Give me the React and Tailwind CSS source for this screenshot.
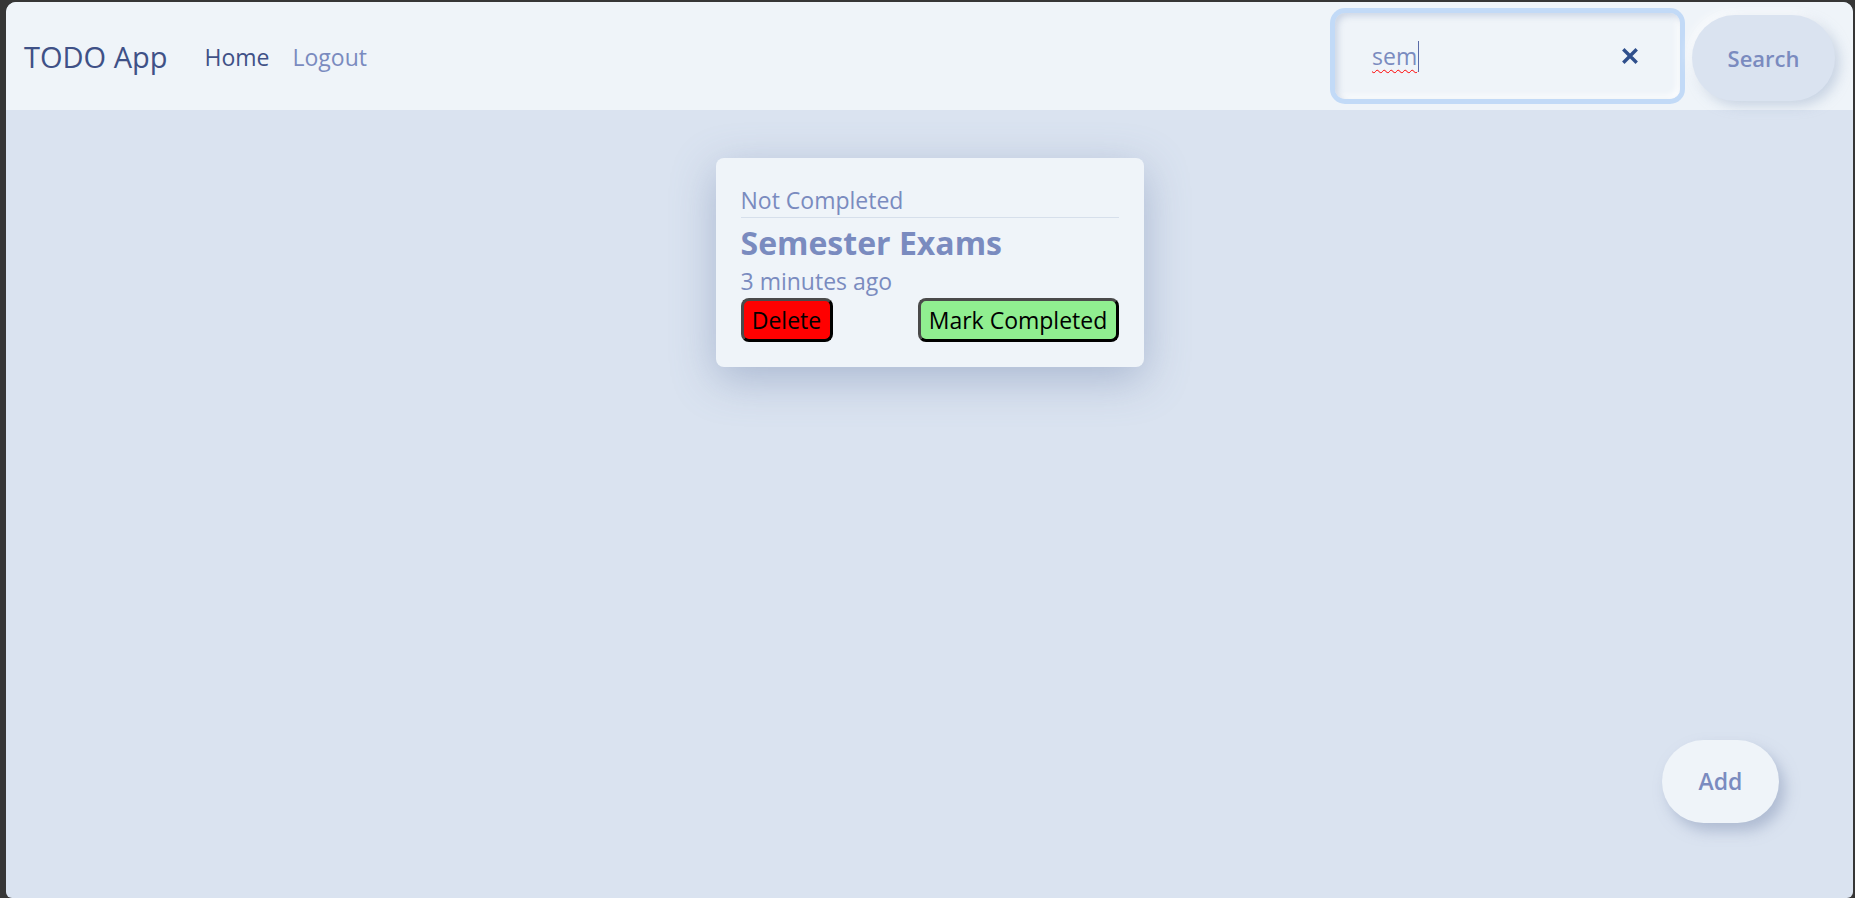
import React from "react";

function XIcon() {
  return (
    <svg width="16" height="16" viewBox="0 0 16 16" className="block">
      <path d="M2.5 2.5 L13.5 13.5 M13.5 2.5 L2.5 13.5" stroke="#2f4f8c" strokeWidth="3.4" strokeLinecap="square" fill="none" />
    </svg>
  );
}

export default function App() {
  return (
    <div className="h-[898px] w-full overflow-hidden bg-[#363636] pt-[2px] pl-[6px] pr-[2px] font-['Open_Sans',sans-serif]">
      <div className="relative flex h-full flex-col overflow-hidden rounded-t-[10px] rounded-b-[6px] bg-[#dae3f0]">
        <header className="flex h-[108px] shrink-0 items-center bg-[#eff4f9] pl-[18px] pr-[18px]">
          <span className="text-[29px] leading-none text-[#3f5187]">TODO App</span>
          <nav className="ml-[37px] mt-[2px] flex items-center text-[23px] leading-none">
            <a className="text-[#3f5187]">Home</a>
            <a className="ml-[23px] text-[#7a8bbf]">Logout</a>
          </nav>
          <div className="ml-auto flex items-center">
            <div className="flex h-[86px] w-[345px] items-center rounded-[10px] bg-[#eff4f9] pl-[37px] pr-[42px] shadow-[inset_3px_3px_6px_rgba(160,175,205,0.45),inset_-3px_-3px_6px_rgba(255,255,255,0.9)] ring-[5px] ring-[#c2daf7]">
              <span className="text-[23px] leading-none text-[#7a8bbf] underline decoration-wavy decoration-[#ff0000] decoration-1 underline-offset-[4px]">sem</span>
              <span className="ml-[1px] h-[31px] w-[1px] bg-[#5a6ba8]" />
              <span className="ml-auto"><XIcon /></span>
            </div>
            <button className="ml-[12px] mt-[4px] flex h-[86px] w-[143px] items-center justify-center rounded-full bg-[#dae3f0] text-[22px] font-semibold text-[#7a8bbf] shadow-[5px_5px_12px_rgba(170,185,210,0.55),-4px_-4px_10px_rgba(255,255,255,0.7)]">
              Search
            </button>
          </div>
        </header>
        <main className="flex flex-1 justify-center pt-[48px]">
          <div className="h-fit w-[428px] rounded-[8px] bg-[#eff4f9] px-[25px] pt-[26px] pb-[25px] shadow-[0_12px_44px_rgba(110,130,170,0.45)]">
            <div className="border-b border-[#d6dfeb] pb-[1px] text-[23px] leading-[32px] text-[#7a8bbf]">Not Completed</div>
            <div className="mt-[5px] text-[32px] font-bold leading-[40px] text-[#7a8bbf]">Semester Exams</div>
            <div className="mt-[3px] text-[23px] leading-[30px] text-[#7a8bbf]">3 minutes ago</div>
            <div className="mt-[2px] flex justify-between">
              <button className="h-[44px] w-[92px] rounded-[8px] border-[3px] border-b-black border-l-[#4a4a4a] border-r-black border-t-[#4a4a4a] bg-[#ff0000] text-[23px] leading-none text-black">Delete</button>
              <button className="h-[44px] w-[201px] rounded-[8px] border-[3px] border-b-black border-l-[#4a4a4a] border-r-black border-t-[#4a4a4a] bg-[#90ee90] text-[23px] leading-none text-black">Mark Completed</button>
            </div>
          </div>
        </main>
        <button className="absolute bottom-[75px] right-[74px] flex h-[83px] w-[117px] items-center justify-center rounded-full bg-[#eff4f9] text-[23px] font-semibold text-[#7a8bbf] shadow-[6px_8px_14px_rgba(140,155,185,0.55)]">
          Add
        </button>
      </div>
    </div>
  );
}
